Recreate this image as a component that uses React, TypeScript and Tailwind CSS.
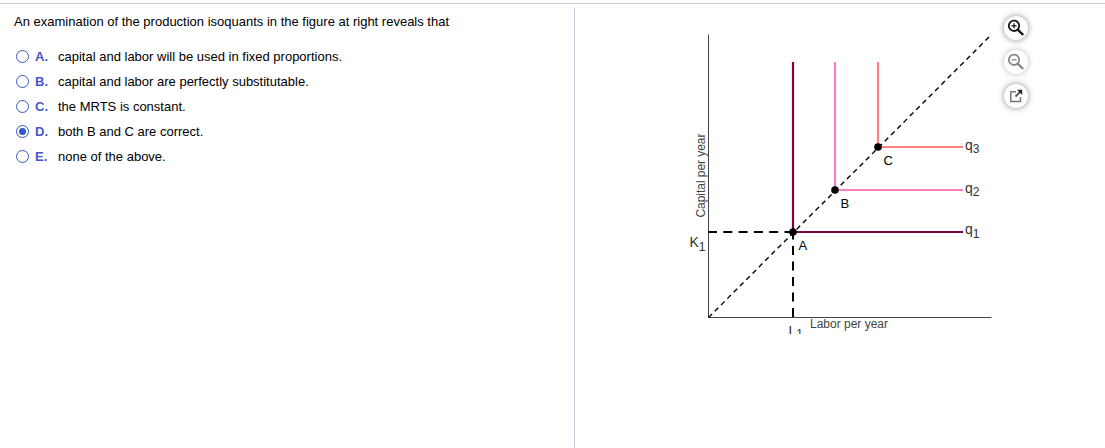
const choices = [
  { letter: 'A', text: 'capital and labor will be used in fixed proportions.' },
  { letter: 'B', text: 'capital and labor are perfectly substitutable.' },
  { letter: 'C', text: 'the MRTS is constant.' },
  { letter: 'D', text: 'both B and C are correct.' },
  { letter: 'E', text: 'none of the above.' },
];

const points = [
  { x: 113, y: 212 },
  { x: 155, y: 170 },
  { x: 198, y: 127 },
];

function Radio({ checked }: { checked: boolean }) {
  return (
    <span className="flex size-[13px] shrink-0 items-center justify-center rounded-full border border-[#3557c8] bg-white">
      {checked && <span className="size-[7px] rounded-full bg-[#3557c8]" />}
    </span>
  );
}

function Question() {
  return (
    <section className="w-[574px] shrink-0 pl-[14px] pt-[5px] text-[13px] leading-[17px] text-black">
      <p className="whitespace-nowrap">
        An examination of the production isoquants in the figure at right reveals that
      </p>
      <ul className="mt-[14px]">
        {choices.map((choice) => (
          <li key={choice.letter} className="flex h-[25px] items-center pl-[2px]">
            <Radio checked={choice.letter === 'D'} />
            <span className="ml-[6px] w-[23px] font-bold text-[#4656cc]">{choice.letter}.</span>
            <span className="whitespace-nowrap">{choice.text}</span>
          </li>
        ))}
      </ul>
    </section>
  );
}

function IsoquantChart() {
  return (
    <svg
      width="316"
      height="318"
      viewBox="0 0 316 318"
      fill="none"
      className="shrink-0 overflow-hidden font-['Liberation_Sans',Arial,sans-serif]"
    >
      {/* axes */}
      <path d="M28.5 14.5V297.5H311.5" stroke="#444" strokeWidth="1" />

      {/* isoquants */}
      <path d="M113 42V212H283" stroke="#800040" strokeWidth="2.2" />
      <path d="M155 42V170H283" stroke="#ff80c0" strokeWidth="2.2" />
      <path d="M198 42V127H283" stroke="#ff8080" strokeWidth="2.2" />

      {/* expansion path */}
      <path d="M28.5 297.5L311.5 14.5" stroke="#000" strokeWidth="1.4" strokeDasharray="5 3.9" />

      <path d="M28 212H113" stroke="#000" strokeWidth="2" strokeDasharray="9 6.3" />
      <path d="M113 297V212" stroke="#000" strokeWidth="2" strokeDasharray="9 6.5" />

      {points.map((p) => (
        <circle key={p.x} cx={p.x} cy={p.y} r="3.8" fill="#000" />
      ))}

      <g fontSize="13" fill="#000">
        <text x="118.5" y="230">A</text>
        <text x="160.5" y="188">B</text>
        <text x="203.5" y="145">C</text>
      </g>
      <g fontSize="14" fill="#333">
        <text x="9.5" y="227">K<tspan dy="4" fontSize="12">1</tspan></text>
        <text x="285" y="214">q<tspan dy="3.5" fontSize="12">1</tspan></text>
        <text x="285" y="173">q<tspan dy="3" fontSize="12">2</tspan></text>
        <text x="285" y="130">q<tspan dy="3" fontSize="12">3</tspan></text>
      </g>
      <g fontSize="12" fill="#444">
        <text x="130" y="308" textLength="78">Labor per year</text>
        <text transform="translate(25 197.5) rotate(-90)" textLength="84">Capital per year</text>
      </g>

      {/* the lower edge of the figure crops this label */}
      <svg x="106" y="303" width="20" height="11" overflow="hidden">
        <text x="2.5" y="13" fontSize="14" fill="#333">
          L<tspan dy="2" fontSize="12">1</tspan>
        </text>
      </svg>
    </svg>
  );
}

function MagnifierIcon({ plus = false }: { plus?: boolean }) {
  return (
    <svg width="18" height="18" viewBox="0 0 18 18" fill="none" stroke="currentColor">
      <circle cx="7" cy="6.8" r="5.2" strokeWidth="1.8" />
      <path d="M10.7 10.6L16.2 16" strokeWidth="2.4" />
      <path d="M4.5 6.8H9.5" strokeWidth="1.3" />
      {plus && <path d="M7 4.3V9.3" strokeWidth="1.3" />}
    </svg>
  );
}

function PopoutIcon() {
  return (
    <svg width="14" height="14" viewBox="0 0 14 14" fill="none">
      <path d="M7 2.8H1.8V12.5H11.5V8" stroke="#777" strokeWidth="1.5" />
      <path d="M6.5 7.5L11 3" stroke="#555" strokeWidth="1.8" />
      <path d="M8 0.8H13.2V6Z" fill="#222" />
    </svg>
  );
}

function Toolbar() {
  return (
    <div className="-mt-1 ml-2 flex flex-col gap-[10px]">
      <button aria-label="Zoom in" className="flex size-6 items-center justify-center rounded-full bg-white text-[#151515] shadow-[0_0_6px_#888]">
        <MagnifierIcon plus />
      </button>
      <button aria-label="Zoom out" className="flex size-6 items-center justify-center rounded-full bg-white text-[#888] shadow-[0_0_6px_#bbb]">
        <MagnifierIcon />
      </button>
      <button aria-label="Pop out" className="flex size-6 items-center justify-center rounded-full bg-white shadow-[0_0_6px_#888]">
        <PopoutIcon />
      </button>
    </div>
  );
}

export default function App() {
  return (
    <main className="h-[448px] w-[1105px] overflow-hidden bg-white pt-[3px] font-['Liberation_Sans',Arial,sans-serif]">
      <div className="flex h-[445px] border-t border-[#c9cad8] pt-1">
        <Question />
        <section className="flex flex-1 items-start border-l border-[#c9cfdf] pl-[105px] pt-3">
          <IsoquantChart />
          <Toolbar />
        </section>
      </div>
    </main>
  );
}
